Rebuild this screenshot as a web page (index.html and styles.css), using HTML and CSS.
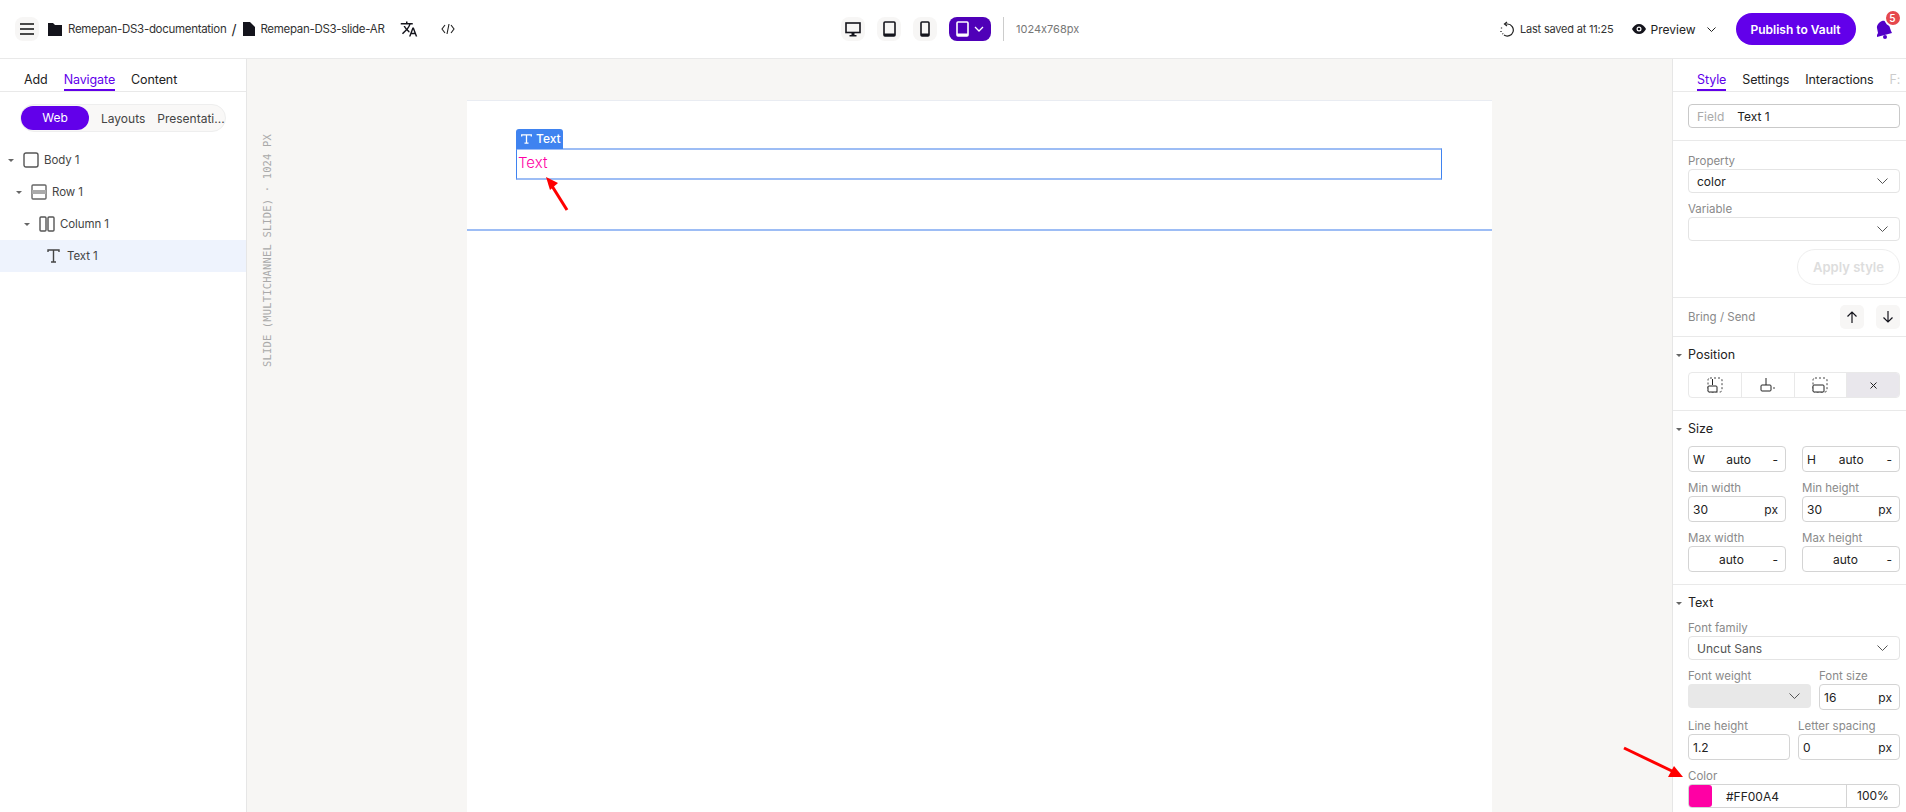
FILE: index.html
```html
<!DOCTYPE html>
<html lang="en">
	<head>
		<meta charset="UTF-8" />
		<title>Remepan-DS3-slide-AR</title>
		<link rel="stylesheet" href="styles.css">
	</head>
	<body>
		<header class="topbar">
			<div class="top-left">
				<button class="icon-btn menu-btn">
					<svg width="14" height="12" viewBox="0 0 14 12"><path d="M0 1h14M0 6h14M0 11h14" stroke="#111" stroke-width="1.3"/></svg>
				</button>
				<svg class="folder" width="14" height="13" viewBox="0 0 14 13"><path d="M0 0h5l2 2h7v11H0z" fill="#14141c"/></svg>
				<span class="crumb">Remepan-DS3-documentation</span>
				<span class="slash">/</span>
				<svg class="file" width="12" height="14" viewBox="0 0 12 14"><path d="M0 0h7l5 5v9H0z" fill="#14141c"/></svg>
				<span class="crumb">Remepan-DS3-slide-AR</span>
				<svg class="translate" width="18" height="18" viewBox="0 0 24 24"><path d="M12.9 15.1l-2.6-2.5c1.8-2 3-4.2 3.8-6.6H17V4h-7V2H8v2H1v2h11.2c-.7 1.9-1.7 3.8-3.2 5.4-.9-1-1.7-2.2-2.3-3.4h-2c.7 1.6 1.7 3.2 3 4.600l-5.100 5L4 19l5-5 3.100 3.100zM18.500 10h-2L12 22h2l1.100-3h4.800l1.100 3h2zm-2.600 7l1.600-4.300 1.600 4.300z" fill="#14141c"/></svg>
				<svg class="code" width="14" height="12" viewBox="0 0 14 12"><path d="M4 2L1 6l3 4M10 2l3 4-3 4M8 1L6 11" fill="none" stroke="#222" stroke-width="1.100"/></svg>
			</div>
			<div class="top-center">
				<button class="icon-btn">
					<svg width="16" height="15" viewBox="0 0 16 15"><rect x="1" y="1" width="14" height="9.500" fill="none" stroke="#14141c" stroke-width="1.600"/><path d="M6.500 11h3v2h2v1.500h-7V13h2z" fill="#14141c"/></svg>
				</button>
				<button class="icon-btn">
					<svg width="13" height="16" viewBox="0 0 13 16"><rect x="1" y="1" width="11" height="14" rx="1" fill="none" stroke="#14141c" stroke-width="1.600"/><rect x="1" y="12.500" width="11" height="2.500" fill="#14141c"/></svg>
				</button>
				<button class="icon-btn">
					<svg width="10" height="16" viewBox="0 0 10 16"><rect x="1" y="1" width="8" height="14" rx="1" fill="none" stroke="#14141c" stroke-width="1.600"/><rect x="1" y="12.500" width="8" height="2.500" fill="#14141c"/></svg>
				</button>
				<button class="device-btn">
					<svg width="13" height="16" viewBox="0 0 13 16"><rect x="1" y="1" width="11" height="14" rx="1" fill="none" stroke="#fff" stroke-width="1.600"/><rect x="1" y="12.500" width="11" height="2.500" fill="#fff"/></svg>
					<svg width="10" height="6" viewBox="0 0 10 6"><path d="M1 1l4 4 4-4" fill="none" stroke="#fff" stroke-width="1.300"/></svg>
				</button>
				<div class="top-divider"></div>
				<span class="size-text">1024x768px</span>
			</div>
			<div class="top-right">
				<svg width="15" height="16" viewBox="0 0 15 16"><path d="M7 1l-2.500 2L7 5" fill="none" stroke="#222" stroke-width="1.200"/><path d="M5 3h2.500a6 6 0 1 1-3.500 11" fill="none" stroke="#222" stroke-width="1.200"/><path d="M1.500 6.500v1M1 10v1M2.500 12.500l.6.6" stroke="#222" stroke-width="1.300"/></svg>
				<span class="saved">Last saved at 11:25</span>
				<svg class="eye" width="14" height="10" viewBox="0 0 14 10"><path d="M0 5c1.500-3 4-5 7-5s5.500 2 7 5c-1.500 3-4 5-7 5S1.500 8 0 5z" fill="#14141c"/><circle cx="7" cy="5" r="2.500" fill="#fff"/><circle cx="7" cy="5" r="1.300" fill="#14141c"/></svg>
				<span class="preview">Preview</span>
				<svg class="preview-chev" width="9" height="5" viewBox="0 0 9 5"><path d="M.5.5l4 4 4-4" fill="none" stroke="#222" stroke-width="1"/></svg>
				<button class="publish">Publish to Vault</button>
				<div class="bell">
					<svg width="20" height="20" viewBox="0 0 20 20"><path d="M9 2c3-1 6 1 7 4l2 6 1 2-15 4 0-2 1-2-1-5c-.5-2.500 2-6 5-7z" fill="#5200c8"/><circle cx="12" cy="18" r="2" fill="#5200c8"/></svg>
					<span class="badge">5</span>
				</div>
			</div>
		</header>

		<div class="workspace">
			<aside class="left-panel">
				<nav class="left-tabs">
					<span>Add</span>
					<span class="active">Navigate</span>
					<span>Content</span>
				</nav>
				<div class="pill-group">
					<span class="pill on">Web</span>
					<span class="pill layouts">Layouts</span>
					<span class="pill presentations">Presentati...</span>
				</div>
				<ul class="tree">
					<li class="lvl0"><i class="caret"></i>
						<svg width="16" height="16" viewBox="0 0 16 16"><rect x="1" y="1" width="14" height="14" rx="2" fill="none" stroke="#555" stroke-width="1.400"/></svg>
						<span>Body 1</span></li>
					<li class="lvl1"><i class="caret"></i>
						<svg width="16" height="16" viewBox="0 0 16 16"><rect x="1" y="1" width="14" height="14" rx="1" fill="none" stroke="#666" stroke-width="1.400"/><rect x="1" y="6" width="14" height="4" fill="#aaa"/></svg>
						<span>Row 1</span></li>
					<li class="lvl2"><i class="caret"></i>
						<svg width="16" height="16" viewBox="0 0 16 16"><rect x="1" y="1" width="6" height="14" rx="1" fill="none" stroke="#555" stroke-width="1.400"/><rect x="9" y="1" width="6" height="14" rx="1" fill="none" stroke="#555" stroke-width="1.400"/></svg>
						<span>Column 1</span></li>
					<li class="lvl3 selected"><i class="caret none"></i>
						<svg width="13" height="14" viewBox="0 0 13 14"><path d="M1 3V1h11v2M6.500 1v12M4 13h5" fill="none" stroke="#444" stroke-width="1.400"/></svg>
						<span>Text 1</span></li>
				</ul>
			</aside>

			<main class="canvas">
				<div class="slide-label">SLIDE (MULTICHANNEL SLIDE) · 1024 PX</div>
				<div class="slide">
					<div class="slide-body">
						<div class="text-box">
							<div class="text-tag">
								<svg width="11" height="10" viewBox="0 0 11 10"><path d="M.7 2.500V.8h9.600v1.700M5.500.8v8.200M3.500 9.200h4" fill="none" stroke="#fff" stroke-width="1.300"/></svg>
								Text
							</div>
							Text
						</div>
					</div>
				</div>
				<svg class="arrow arrow-a" width="30" height="40" viewBox="0 0 30 40"><path d="M24 35L9 11" stroke="#f00" stroke-width="3"/><path d="M3 2l12 6-8 7z" fill="#f00"/></svg>
			</main>

			<aside class="right-panel">
				<nav class="right-tabs">
					<span class="active">Style</span>
					<span>Settings</span>
					<span>Interactions</span>
					<span class="faded">F:</span>
				</nav>

				<section class="sec sec-field">
					<div class="box field-box"><span class="muted">Field</span><span>Text 1</span></div>
				</section>

				<section class="sec">
					<div class="label">Property</div>
					<div class="box select">color<svg class="chev" width="11" height="6" viewBox="0 0 11 6"><path d="M.5.5l5 5 5-5" fill="none" stroke="#555" stroke-width="1"/></svg></div>
					<div class="label gap">Variable</div>
					<div class="box select"><svg class="chev" width="11" height="6" viewBox="0 0 11 6"><path d="M.5.5l5 5 5-5" fill="none" stroke="#555" stroke-width="1"/></svg></div>
					<div class="apply-row"><button class="apply">Apply style</button></div>
				</section>

				<section class="sec sec-bring">
					<span class="bring-label">Bring / Send</span>
					<button class="icon-btn small"><svg width="12" height="12" viewBox="0 0 12 12"><path d="M6 12V1M1.500 5.500L6 1l4.500 4.500" fill="none" stroke="#14141c" stroke-width="1.200"/></svg></button>
					<button class="icon-btn small"><svg width="12" height="12" viewBox="0 0 12 12"><path d="M6 0v11M1.500 6.500L6 11l4.500-4.500" fill="none" stroke="#14141c" stroke-width="1.200"/></svg></button>
				</section>

				<section class="sec">
					<h3 class="head"><i class="caret"></i>Position</h3>
					<div class="segments">
						<span><svg width="16" height="16" viewBox="0 0 16 16"><rect x="1" y="1" width="14" height="14" rx="2" fill="none" stroke="#444" stroke-dasharray="2 2"/><path d="M5.500 2v6" stroke="#222"/><rect x="1" y="9" width="9" height="6" rx="1" fill="#fff" stroke="#222"/></svg></span>
						<span><svg width="16" height="16" viewBox="0 0 16 16"><path d="M6 1v7" stroke="#222"/><rect x="1" y="8" width="10" height="6" rx="1" fill="none" stroke="#222"/><path d="M13 11h2" stroke="#444"/></svg></span>
						<span><svg width="16" height="16" viewBox="0 0 16 16"><rect x="1" y="1" width="14" height="14" rx="2" fill="none" stroke="#444" stroke-dasharray="2 2"/><rect x="1" y="8" width="11" height="7" rx="1" fill="#fff" stroke="#222"/></svg></span>
						<span class="seg-on"><svg width="9" height="9" viewBox="0 0 9 9"><path d="M1.500 1.500l6 6M7.500 1.500l-6 6" stroke="#222"/></svg></span>
					</div>
				</section>

				<section class="sec">
					<h3 class="head"><i class="caret"></i>Size</h3>
					<div class="two">
						<div class="box num"><b>W</b><em>auto</em><u>-</u></div>
						<div class="box num"><b>H</b><em>auto</em><u>-</u></div>
					</div>
					<div class="two labels"><div class="label">Min width</div><div class="label">Min height</div></div>
					<div class="two">
						<div class="box num"><b>30</b><u>px</u></div>
						<div class="box num"><b>30</b><u>px</u></div>
					</div>
					<div class="two labels"><div class="label">Max width</div><div class="label">Max height</div></div>
					<div class="two">
						<div class="box num"><em class="wide">auto</em><u>-</u></div>
						<div class="box num"><em class="wide">auto</em><u>-</u></div>
					</div>
				</section>

				<section class="sec sec-text">
					<h3 class="head"><i class="caret"></i>Text</h3>
					<div class="label">Font family</div>
					<div class="box select soft">Uncut Sans<svg class="chev" width="11" height="6" viewBox="0 0 11 6"><path d="M.5.5l5 5 5-5" fill="none" stroke="#555" stroke-width="1"/></svg></div>
					<div class="weight-row labels"><div class="label">Font weight</div><div class="label">Font size</div></div>
					<div class="weight-row">
						<div class="weight-box"><svg class="chev" width="11" height="6" viewBox="0 0 11 6"><path d="M.5.5l5 5 5-5" fill="none" stroke="#555" stroke-width="1"/></svg></div>
						<div class="box num"><b>16</b><u>px</u></div>
					</div>
					<div class="line-row labels"><div class="label">Line height</div><div class="label">Letter spacing</div></div>
					<div class="line-row">
						<div class="box num"><b>1.2</b></div>
						<div class="box num"><b>0</b><u>px</u></div>
					</div>
					<div class="label gap">Color</div>
					<div class="color-row">
						<span class="swatch"></span>
						<span class="hex">#FF00A4</span>
						<span class="alpha">100%</span>
					</div>
				</section>
			</aside>
		</div>
		<svg class="arrow arrow-b" width="66" height="34" viewBox="0 0 66 34"><path d="M2 2l50 24" stroke="#f00" stroke-width="3"/><path d="M61 31l-15 0 6-11z" fill="#f00"/></svg>
	</body>
</html>
```

FILE: styles.css
```css
* {
	box-sizing: border-box;
	margin: 0;
	padding: 0;
}
html, body {
	height: 100%;
	overflow: hidden;
}
body {
	position: relative;
	font-family: "Inter", "Liberation Sans", sans-serif;
	font-feature-settings: "calt" 0;
	font-size: 12px;
	color: #222;
	background: #fff;
}
button {
	border: none;
	font: inherit;
	cursor: pointer;
}

/* top bar */
.topbar {
	height: 59px;
	border-bottom: 1px solid #e9e9e9;
	display: grid;
	grid-template-columns: 841px 659px 1fr;
	align-items: center;
}
.top-left, .top-center, .top-right {
	display: flex;
	align-items: center;
	white-space: nowrap;
}
.top-left {
	padding-left: 15px;
}
.icon-btn {
	width: 24px;
	height: 24px;
	border-radius: 8px;
	background: #f7f6f5;
	display: flex;
	align-items: center;
	justify-content: center;
	flex: none;
}
.icon-btn.small {
	border-radius: 5px;
}
.folder {
	margin-left: 9px;
	margin-right: 6px;
}
.crumb {
	font-size: 11.500px;
	letter-spacing: -0.3px;
	color: #333;
}
.slash {
	margin: 0 7px 0 5px;
	font-size: 14px;
}
.file {
	margin-right: 5px;
}
.translate {
	margin-left: 15px;
}
.code {
	margin-left: 23px;
}
.top-center {
	gap: 12px;
}
.device-btn {
	width: 42px;
	height: 24px;
	border-radius: 8px;
	background: #4f00b8;
	display: flex;
	align-items: center;
	justify-content: center;
	gap: 5px;
}
.top-divider {
	width: 1px;
	height: 24px;
	background: #ccc;
}
.size-text {
	color: #777;
	font-size: 11px;
}
.saved {
	margin-left: 5px;
	font-size: 11px;
	letter-spacing: -0.2px;
	color: #333;
}
.eye {
	margin-left: 18px;
}
.preview {
	margin-left: 5px;
	font-size: 12px;
}
.preview-chev {
	margin-left: 11px;
}
.publish {
	width: 120px;
	height: 32px;
	margin-left: 20px;
	border-radius: 16px;
	background: #6200ea;
	color: #fff;
	font-weight: 600;
	font-size: 12px;
}
.bell {
	position: relative;
	margin-left: 17px;
	height: 20px;
}
.badge {
	position: absolute;
	right: -9px;
	top: -10px;
	width: 18px;
	height: 18px;
	border-radius: 50%;
	background: #e5484d;
	border: 2px solid #fff;
	color: #fff;
	font-size: 10px;
	font-weight: 600;
	line-height: 14px;
	text-align: center;
}

/* main area */
.workspace {
	display: flex;
	height: 753px;
}

/* left panel */
.left-panel {
	width: 247px;
	border-right: 1px solid #e6e6e6;
	flex: none;
}
.left-tabs {
	height: 33px;
	border-bottom: 1px solid #e9e9e9;
	display: flex;
	gap: 16px;
	padding-left: 24px;
	font-size: 12.500px;
	letter-spacing: -0.1px;
}
.left-tabs span {
	height: 32px;
	line-height: 41px;
	color: #222;
}
.left-tabs .active, .right-tabs .active {
	color: #6200ea;
	border-bottom: 2px solid #6200ea;
}
.pill-group {
	margin: 12px 0 0 20px;
	width: 206px;
	height: 28px;
	border: 1px solid #eee;
	background: #f9f8f7;
	border-radius: 14px;
	padding: 1px 0;
	display: flex;
	align-items: center;
	font-size: 12px;
	color: #444;
}
.pill {
	white-space: nowrap;
}
.pill.on {
	width: 68px;
	height: 24px;
	border-radius: 12px;
	background: #6200ea;
	color: #fff;
	text-align: center;
	line-height: 24px;
}
.layouts {
	margin-left: 12px;
}
.presentations {
	margin-left: 12px;
}
.tree {
	list-style: none;
	margin-top: 12px;
	font-size: 11.500px;
	letter-spacing: -0.1px;
	color: #444;
}
.tree li {
	height: 32px;
	display: flex;
	align-items: center;
}
.tree li span {
	margin-left: 5px;
}
.tree li.selected {
	background: #eef3fd;
}
.tree li.selected span {
	margin-left: 7px;
}
.lvl0 { padding-left: 8px; }
.lvl1 { padding-left: 16px; }
.lvl2 { padding-left: 24px; }
.lvl3 { padding-left: 32px; }
.caret {
	display: inline-block;
	width: 0;
	height: 0;
	border-left: 3px solid transparent;
	border-right: 3px solid transparent;
	border-top: 3px solid #666;
	margin-right: 9px;
	flex: none;
}
.caret.none {
	border-top-color: transparent;
}

/* canvas */
.canvas {
	position: relative;
	flex: 1;
	background: #f7f6f4;
	display: flex;
	min-width: 0;
}
.slide-label {
	flex: none;
	font-family: "DejaVu Sans Mono", monospace;
	font-size: 10.500px;
	letter-spacing: 0.15px;
	color: #a9a9a9;
	white-space: nowrap;
	writing-mode: vertical-rl;
	transform: rotate(180deg);
	height: 233px;
	width: 12px;
	margin: 75px 194px 0 14px;
}
.slide {
	width: 1025px;
	margin-top: 41px;
	background: #fff;
	border-top: 1px solid #e9ecf2;
}
.slide-body {
	height: 130px;
	border-bottom: 2px solid #9dbdf5;
	padding: 47px 50px 0 49px;
}
.text-box {
	position: relative;
	height: 32px;
	border: 2px solid #9dbdf5;
	border-left: 1px solid #3f83f0;
	border-right: 1px solid #3f83f0;
	color: #ff00a4;
	font-size: 15px;
	font-weight: 300;
	line-height: 26px;
	padding-left: 1px;
}
.text-tag {
	position: absolute;
	left: -1px;
	top: -21px;
	width: 47px;
	height: 20px;
	background: #3f83f0;
	border-radius: 3px 3px 0 0;
	color: #fff;
	font-size: 12px;
	font-weight: 500;
	line-height: 20px;
	display: flex;
	align-items: center;
	gap: 4px;
	padding-left: 5px;
}
.arrow {
	position: absolute;
}
.arrow-a {
	left: 296px;
	top: 116px;
}
.arrow-b {
	left: 1622px;
	top: 746px;
}

/* right panel */
.right-panel {
	width: 234px;
	flex: none;
	border-left: 1px solid #e6e6e6;
	background: #fff;
	overflow: hidden;
}
.right-tabs {
	height: 33px;
	border-bottom: 1px solid #e9e9e9;
	display: flex;
	gap: 16px;
	padding-left: 24px;
	font-size: 12.500px;
	letter-spacing: -0.1px;
	white-space: nowrap;
}
.right-tabs span {
	height: 32px;
	line-height: 41px;
}
.right-tabs .faded {
	color: #ccc;
}
.sec {
	padding: 12px 6px 12px 15px;
	border-bottom: 1px solid #e9e9e9;
}
.sec-text {
	border-bottom: none;
	padding-top: 8px;
}
.label {
	height: 16px;
	line-height: 16px;
	font-size: 11.500px;
	color: #8a8a8a;
	white-space: nowrap;
}
.label.gap {
	margin-top: 8px;
}
.box {
	height: 24px;
	border: 1px solid #e4e4e4;
	border-radius: 4px;
	display: flex;
	align-items: center;
	font-size: 12px;
	color: #222;
	background: #fff;
}
.field-box {
	border-color: #c9c9c9;
	padding-left: 8px;
	gap: 13px;
}
.muted {
	color: #aaa;
}
.select {
	padding-left: 8px;
	padding-right: 11px;
}
.select .chev {
	margin-left: auto;
}
.select.soft {
	color: #555;
}
.apply-row {
	display: flex;
	justify-content: flex-end;
	margin-top: 8px;
}
.apply {
	width: 103px;
	height: 36px;
	border-radius: 18px;
	border: 1px solid #eee;
	background: #fff;
	color: #ddd;
	font-weight: 600;
	font-size: 13px;
}
.sec-bring {
	height: 39px;
	padding-top: 7px;
	padding-bottom: 0;
	display: flex;
	gap: 12px;
}
.bring-label {
	flex: 1;
	color: #8a8a8a;
	font-size: 11.500px;
	line-height: 24px;
}
.head {
	height: 20px;
	line-height: 20px;
	margin-left: -12px;
	font-size: 12.500px;
	font-weight: 400;
	color: #222;
	display: flex;
	align-items: center;
}
.head .caret {
	margin-right: 6px;
}
.sec .head {
	margin-top: -4px;
}
.head + .segments, .head + .two {
	margin-top: 7px;
}
.sec-text .head {
	margin-top: 0;
	margin-bottom: 7px;
}
.segments {
	height: 26px;
	border: 1px solid #e9e9e9;
	border-radius: 4px;
	display: flex;
	overflow: hidden;
}
.segments span {
	flex: 1;
	border-right: 1px solid #e9e9e9;
	display: flex;
	align-items: center;
	justify-content: center;
}
.segments .seg-on {
	background: #e9e7ec;
	border-right: none;
}
.two {
	display: grid;
	grid-template-columns: 98px 98px;
	gap: 16px;
}
.two.labels {
	margin-top: 8px;
}
.num {
	height: 26px;
	border-color: #d4d4d4;
	padding: 0 7px 0 4px;
	justify-content: space-between;
}
.num b {
	font-weight: 400;
}
.num em {
	font-style: normal;
}
.num em.wide {
	margin-left: 26px;
}
.num u {
	text-decoration: none;
}
.weight-row {
	display: grid;
	grid-template-columns: 123px 81px;
	gap: 8px;
}
.weight-row.labels {
	margin-top: 8px;
}
.weight-box {
	height: 24px;
	border-radius: 4px;
	background: #e8e8e8;
	display: flex;
	align-items: center;
	justify-content: flex-end;
	padding-right: 11px;
}
.line-row {
	display: grid;
	grid-template-columns: 102px 102px;
	gap: 8px;
}
.line-row.labels {
	margin-top: 8px;
}
.color-row {
	height: 24px;
	border: 1px solid #d4d4d4;
	border-radius: 4px;
	display: flex;
	align-items: center;
	font-size: 12px;
}
.swatch {
	width: 23px;
	height: 22px;
	border-radius: 3px;
	background: #ff00a4;
}
.hex {
	margin-left: 14px;
	flex: 1;
}
.alpha {
	width: 53px;
	height: 22px;
	line-height: 22px;
	border-left: 1px solid #d4d4d4;
	text-align: center;
}
```
